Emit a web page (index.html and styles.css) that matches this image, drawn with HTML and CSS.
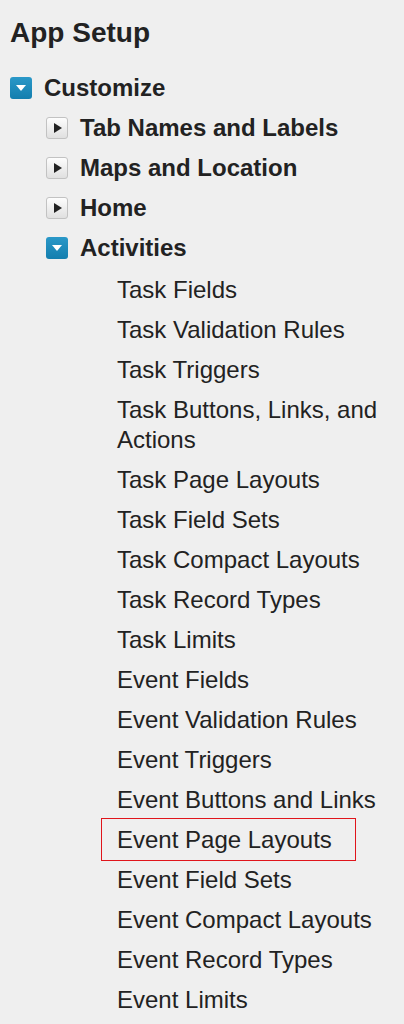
FILE: index.html
```html
<!DOCTYPE html>
<html>
<head>
<meta charset="utf-8">
<link rel="stylesheet" href="styles.css">
</head>
<body>
<div class="panel">
  <h1 class="title">App Setup</h1>
  <ul class="tree">
    <li>
      <div class="node">
        <span class="tog open"></span><span class="label">Customize</span>
      </div>
      <ul class="sub">
        <li><div class="node"><span class="tog closed"></span><span class="label">Tab Names and Labels</span></div></li>
        <li><div class="node"><span class="tog closed"></span><span class="label">Maps and Location</span></div></li>
        <li><div class="node"><span class="tog closed"></span><span class="label">Home</span></div></li>
        <li>
          <div class="node"><span class="tog open"></span><span class="label">Activities</span></div>
          <ul class="leaves">
            <li class="leaf">Task Fields</li>
            <li class="leaf">Task Validation Rules</li>
            <li class="leaf">Task Triggers</li>
            <li class="leaf">Task Buttons, Links, and Actions</li>
            <li class="leaf">Task Page Layouts</li>
            <li class="leaf">Task Field Sets</li>
            <li class="leaf">Task Compact Layouts</li>
            <li class="leaf">Task Record Types</li>
            <li class="leaf">Task Limits</li>
            <li class="leaf">Event Fields</li>
            <li class="leaf">Event Validation Rules</li>
            <li class="leaf">Event Triggers</li>
            <li class="leaf">Event Buttons and Links</li>
            <li class="leaf selected">Event Page Layouts</li>
            <li class="leaf">Event Field Sets</li>
            <li class="leaf">Event Compact Layouts</li>
            <li class="leaf">Event Record Types</li>
            <li class="leaf">Event Limits</li>
          </ul>
        </li>
      </ul>
    </li>
  </ul>
</div>
</body>
</html>
```
FILE: styles.css
```css
html, body {
  margin: 0;
  padding: 0;
  background: #efefef;
}
body {
  font-family: "Liberation Sans", Arial, sans-serif;
  color: #222;
}
.panel {
  padding: 18px 10px 0 10px;
}
.title {
  margin: 0;
  font-size: 28px;
  line-height: 30px;
  font-weight: bold;
  color: #222;
}
ul {
  list-style: none;
  margin: 0;
  padding: 0;
}
.tree {
  margin-top: 20px;
}
.node {
  display: flex;
  align-items: center;
  height: 40px;
  gap: 12px;
}
.label {
  font-size: 24px;
  font-weight: bold;
  line-height: 40px;
}
.sub {
  padding-left: 36px;
}
.tog {
  position: relative;
  flex: 0 0 auto;
  width: 22px;
  height: 22px;
  box-sizing: border-box;
  border-radius: 3px;
}
.tog.open {
  background: linear-gradient(#2a98c8, #137eae);
}
.tog.open::after {
  content: "";
  position: absolute;
  left: 6px;
  top: 8px;
  border-left: 5px solid transparent;
  border-right: 5px solid transparent;
  border-top: 6px solid #fff;
}
.tog.closed {
  background: linear-gradient(#fdfdfd, #e0e0e0);
  border: 1px solid #c2c2c2;
}
.tog.closed::after {
  content: "";
  position: absolute;
  left: 7px;
  top: 5px;
  border-top: 5px solid transparent;
  border-bottom: 5px solid transparent;
  border-left: 8px solid #222;
}
.leaves {
  padding-left: 71px;
  margin-top: 2px;
  padding-right: 4px;
}
.leaf {
  font-size: 24px;
  line-height: 30px;
  padding: 5px 0;
}
.leaf.selected {
  box-sizing: border-box;
  width: 255px;
  margin: -2px 0 -1px -16px;
  padding: 6px 0 5px 15px;
  border: 1px solid #e0151b;
}
```
